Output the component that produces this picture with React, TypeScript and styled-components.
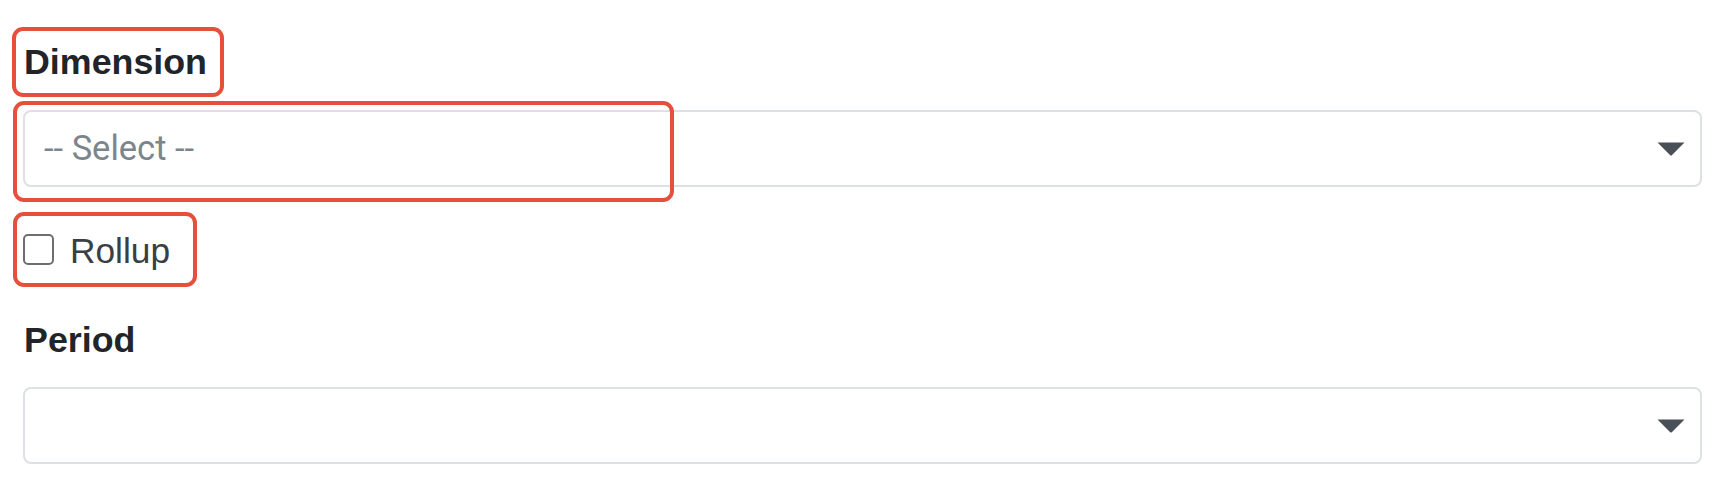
import React from "react";
import styled, { createGlobalStyle } from "styled-components";

const GlobalStyle = createGlobalStyle`
  html, body {
    margin: 0;
    padding: 0;
    background: #ffffff;
  }
  * { box-sizing: border-box; }
`;

const Page = styled.div`
  display: flex;
  flex-direction: column;
  padding: 42px 27px 0 23px;
  width: 1729px;
  font-family: "Liberation Sans", Arial, sans-serif;
`;

const Field = styled.div<{ $mt?: number }>`
  position: relative;
  display: flex;
  flex-direction: column;
  margin-top: ${(p) => p.$mt ?? 0}px;
`;

const LabelText = styled.label`
  display: block;
  align-self: flex-start;
  font-family: "Liberation Sans", Arial, sans-serif;
  font-weight: 700;
  font-size: 35.8px;
  line-height: 40px;
  color: #212529;
  margin-left: 1px;
`;

const SelectBox = styled.div<{ $mt: number }>`
  display: flex;
  align-items: center;
  justify-content: space-between;
  height: 77px;
  margin-top: ${(p) => p.$mt}px;
  border: 2px solid #dde1e5;
  border-radius: 8px;
  padding: 0 15px 0 19px;
  background: #fff;
`;

const Placeholder = styled.span`
  font-family: Roboto, "Liberation Sans", sans-serif;
  font-size: 34.5px;
  line-height: 41px;
  color: #7d858c;
`;

const CheckRow = styled.div`
  position: relative;
  display: flex;
  align-items: flex-start;
  gap: 16px;
  margin-top: 44px;
`;

const Check = styled.input`
  appearance: none;
  -webkit-appearance: none;
  margin: 3px 0 0 0;
  width: 31px;
  height: 31px;
  border: 2px solid #6e6e6e;
  border-radius: 5px;
  background: #fff;
`;

const CheckText = styled.span`
  font-family: "Liberation Sans", Arial, sans-serif;
  font-size: 35.3px;
  line-height: 40px;
  color: #3a3f44;
`;

const Highlight = styled.div<{ $l: number; $t: number; $w: number; $h: number }>`
  position: absolute;
  left: ${(p) => p.$l}px;
  top: ${(p) => p.$t}px;
  width: ${(p) => p.$w}px;
  height: ${(p) => p.$h}px;
  border: 4px solid #e4503b;
  border-radius: 11px;
  pointer-events: none;
`;

const Caret = () => (
  <svg width="28" height="14" viewBox="0 0 28 14" aria-hidden="true">
    <path d="M0.5 0.5 L27.5 0.5 L14.8 13.2 Q14 14 13.2 13.2 Z" fill="#4a5057" />
  </svg>
);

const Select: React.FC<{ placeholder?: string; mt: number }> = ({ placeholder, mt }) => (
  <SelectBox $mt={mt}>
    <Placeholder>{placeholder ?? ""}</Placeholder>
    <Caret />
  </SelectBox>
);

export default function App() {
  return (
    <>
      <GlobalStyle />
      <Page>
        <Field>
          <LabelText>Dimension</LabelText>
          <Highlight $l={-11} $t={-15} $w={212} $h={70} />
          <Select placeholder="-- Select --" mt={28} />
          <Highlight $l={-10} $t={59} $w={661} $h={101} />
        </Field>
        <CheckRow>
          <Check type="checkbox" />
          <CheckText>Rollup</CheckText>
          <Highlight $l={-10} $t={-19} $w={184} $h={75} />
        </CheckRow>
        <Field $mt={49}>
          <LabelText>Period</LabelText>
          <Select mt={27} />
        </Field>
      </Page>
    </>
  );
}
